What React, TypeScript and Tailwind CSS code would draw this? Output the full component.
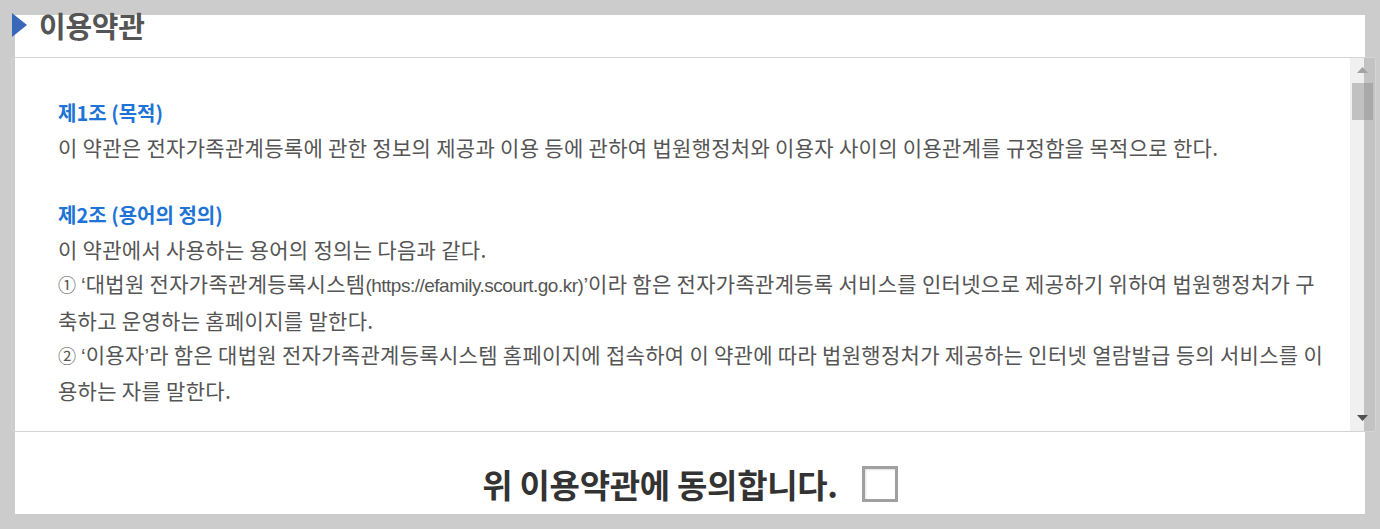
import React from "react";

const font = { fontFamily: '"Noto Sans CJK KR", "Noto Sans", sans-serif' };

const Q = ({ c }: { c: string }) => (
  <span className="tracking-[0px]" style={{ fontFamily: '"Liberation Sans", sans-serif' }}>{c}</span>
);
const Num = ({ c }: { c: string }) => <span className="text-[18px] tracking-[0px]">{c}</span>;

export default function App() {
  return (
    <div className="w-[1380px] h-[529px] bg-[#cccccc] p-[15px] overflow-hidden" style={font}>
      <div className="w-[1350px] h-[499px] bg-white flex flex-col">
        <div className="flex items-center h-[26px] -mt-[3px] -ml-[3px] gap-[12px]">
          <svg width="15" height="24" viewBox="0 0 15 24" className="shrink-0">
            <polygon points="0,0 15,12 0,24" fill="#3b67b8" />
          </svg>
          <span className="text-[29px] font-bold leading-none text-[#555555] tracking-[-0.3px]">이용약관</span>
        </div>
        <div className="relative mt-[19px] -ml-[4px] w-[1365px] h-[375px] border border-[#d4d4d4] rounded-[3px] overflow-hidden">
          <div className="pl-[46px] pt-[38px] text-[21px] leading-[34px] text-[#555555] tracking-[0.3px] whitespace-nowrap">
            <div className="font-bold text-[#1e73d6] text-[20px] tracking-[0px]">제1조 (목적)</div>
            <div>이 약관은 전자가족관계등록에 관한 정보의 제공과 이용 등에 관하여 법원행정처와 이용자 사이의 이용관계를 규정함을 목적으로 한다.</div>
            <div>&nbsp;</div>
            <div className="font-bold text-[#1e73d6] text-[20px] tracking-[0px]">제2조 (용어의 정의)</div>
            <div>이 약관에서 사용하는 용어의 정의는 다음과 같다.</div>
            <div>
              <Num c="①" /> <Q c="‘" />대법원 전자가족관계등록시스템
              <span className="text-[19px] tracking-[-0.5px]" style={{ fontFamily: '"Liberation Sans", sans-serif' }}>(https://efamily.scourt.go.kr)</span>
              <Q c="’" />이라 함은 전자가족관계등록 서비스를 인터넷으로 제공하기 위하여 법원행정처가 구
            </div>
            <div>축하고 운영하는 홈페이지를 말한다.</div>
            <div>
              <Num c="②" /> <Q c="‘" />이용자<Q c="’" />라 함은 대법원 전자가족관계등록시스템 홈페이지에 접속하여 이 약관에 따라 법원행정처가 제공하는 인터넷 열람발급 등의 서비스를 이
            </div>
            <div>용하는 자를 말한다.</div>
          </div>
          <div className="absolute right-0 top-0 h-full w-[25px] flex">
            <div className="w-[14px] h-full bg-[#f0f0f0]" />
            <div className="w-[11px] h-full bg-[#c3c3c3]" />
          </div>
          <div className="absolute right-[2px] top-[25px] h-[37px] w-[21px] flex">
            <div className="w-[12px] h-full bg-[#c1c1c1]" />
            <div className="w-[9px] h-full bg-[#a9a9a9]" />
          </div>
          <svg className="absolute right-[7px] top-[9px]" width="11" height="6" viewBox="0 0 11 6">
            <polygon points="5.5,0 11,6 0,6" fill="#a3a3a3" />
          </svg>
          <svg className="absolute right-[7px] bottom-[10px]" width="11" height="6" viewBox="0 0 11 6">
            <polygon points="0,0 11,0 5.5,6" fill="#505050" />
          </svg>
        </div>
        <div className="flex-1 flex items-center justify-center gap-[24px] pt-[22px]">
          <span className="text-[33px] font-bold text-[#333333] leading-none tracking-[-0.3px]">위 이용약관에 동의합니다.</span>
          <div className="w-[36px] h-[36px] border-[3px] border-[#a0a0a0] bg-white shadow-[inset_1px_1px_2px_rgba(0,0,0,0.12)]" />
        </div>
      </div>
    </div>
  );
}
